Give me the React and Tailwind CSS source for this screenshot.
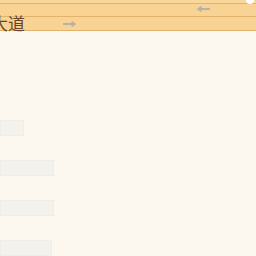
function Arrow({ left }) {
  return (
    <svg width="14" height="6" viewBox="0 0 14 6" className="shrink-0">
      {left ? (
        <path d="M13 3H2M4.5 0.8L1.5 3L4.5 5.2" fill="none" stroke="#b6b3ab" strokeWidth="2" />
      ) : (
        <path d="M1 3H12M9.5 0.8L12.5 3L9.5 5.2" fill="none" stroke="#b6b3ab" strokeWidth="2" />
      )}
    </svg>
  );
}

export default function App() {
  return (
    <div className="w-[256px] h-[256px] overflow-hidden bg-[#fcf8f0] font-['Noto_Sans_CJK_SC',sans-serif]">
      <div className="h-[3px] bg-[#f9d69a] flex justify-end">
        <span className="w-[8px] h-[4px] mr-[2px] rounded-b-sm bg-white" />
      </div>
      <div className="h-[13px] bg-[#f9d394] border-t border-[#e2b370] flex items-center pl-[197px] pb-[2px]">
        <Arrow left />
      </div>
      <div className="h-[13px] bg-[#f9d394] border-y border-[#e2b370] box-content flex items-center overflow-visible">
        <span className="-ml-[9px] -mt-[2px] text-[17px] leading-[20px] text-[#64432a] whitespace-nowrap">大道</span>
        <span className="ml-[37px]">
          <Arrow />
        </span>
      </div>
      <div className="flex flex-col gap-[24px] pt-[89px]">
        <div className="w-[24px] h-[16px] bg-[#f3f2ec] border border-[#efede5]" />
        <div className="w-[54px] h-[16px] bg-[#f3f2ec] border border-[#efede5]" />
        <div className="w-[54px] h-[16px] bg-[#f3f2ec] border border-[#efede5]" />
        <div className="w-[52px] h-[16px] bg-[#f3f2ec] border border-[#efede5]" />
      </div>
    </div>
  );
}
